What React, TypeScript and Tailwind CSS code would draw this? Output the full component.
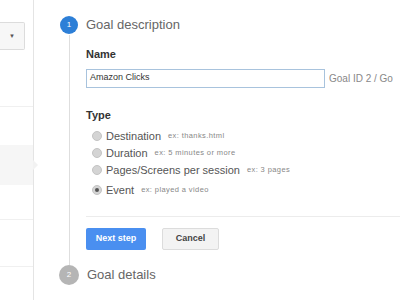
import React from 'react';

const types = [
    { label: 'Destination', hint: 'ex: thanks.html', checked: false },
    { label: 'Duration', hint: 'ex: 5 minutes or more', checked: false },
    { label: 'Pages/Screens per session', hint: 'ex: 3 pages', checked: false },
    { label: 'Event', hint: 'ex: played a video', checked: true },
];

const Radio: React.FC<{ checked: boolean }> = ({ checked }) => (
    <span className="w-[10px] h-[10px] rounded-full bg-[#d4d4d4] border border-[#c4c4c4] flex items-center justify-center shrink-0">
        {checked && <span className="w-[4px] h-[4px] rounded-full bg-[#555]" />}
    </span>
);

const Sidebar: React.FC = () => (
    <div className="relative w-[34px] shrink-0 border-r border-[#e4e4e4] h-[300px] flex flex-col">
        <div className="h-[22px]" />
        <div className="h-[28px] w-[25px] bg-[#f7f7f7] border border-[#dcdcdc] border-l-0 rounded-r-[2px] flex items-center justify-center">
            <span className="text-[6px] text-[#555] leading-none">▼</span>
        </div>
        <div className="h-[57px] border-b border-[#f0f0f0]" />
        <div className="h-[38px]" />
        <div className="h-[40px] bg-[#f6f6f6]" />
        <div className="h-[35px] border-b border-[#f0f0f0]" />
        <div className="h-[47px] border-b border-[#f0f0f0]" />
        <span className="absolute right-[-5px] top-[160px] w-0 h-0 border-y-[5px] border-y-transparent border-l-[5px] border-l-[#f2f2f2]" />
    </div>
);

export default function App() {
    return (
        <div className="w-[400px] h-[300px] bg-white overflow-hidden flex font-['Liberation_Sans',Arial,sans-serif]">
            <Sidebar />
            <div className="flex-1 min-w-0 pl-[26px] pt-[15px]">
                <div className="flex items-center gap-[8px]">
                    <span className="w-[18px] h-[18px] rounded-full bg-[#2d7fd7] text-white text-[8px] flex items-center justify-center shrink-0">1</span>
                    <span className="text-[13px] text-[#666]">Goal description</span>
                </div>
                <div className="ml-[9px] border-l border-[#dedede] pl-[16px] pt-[12px] pb-[15px]">
                    <div className="text-[11px] font-bold text-[#333] leading-[14px]">Name</div>
                    <div className="mt-[8px] flex items-center gap-[4px] whitespace-nowrap overflow-hidden">
                        <div className="w-[239px] h-[19px] border border-[#a8c3dd] px-[3px] flex items-center text-[9px] text-[#333] shrink-0">Amazon Clicks</div>
                        <span className="text-[10px] text-[#888]">Goal ID 2 / Go</span>
                    </div>
                    <div className="mt-[20px] text-[11px] font-bold text-[#333] leading-[14px]">Type</div>
                    <div className="mt-[6px] pl-[6px] flex flex-col">
                        {types.map((t) => (
                            <div key={t.label} className="h-[17px] last:h-[20px] last:pt-[3px] flex items-center gap-[4px] whitespace-nowrap">
                                <Radio checked={t.checked} />
                                <span className="text-[11px] text-[#555]">{t.label}</span>
                                <span className="ml-[3px] text-[7.5px] tracking-[0.4px] text-[#888]">{t.hint}</span>
                            </div>
                        ))}
                    </div>
                    <div className="mt-[17px] border-t border-[#ececec]" />
                    <div className="mt-[11px] flex gap-[16px]">
                        <button className="w-[60px] h-[22px] bg-[#4a8ff0] text-white text-[9px] font-bold rounded-[2px]">Next step</button>
                        <button className="w-[57px] h-[22px] bg-[#f3f3f3] border border-[#dcdcdc] text-[#444] text-[9px] font-bold rounded-[2px]">Cancel</button>
                    </div>
                </div>
                <div className="flex items-center gap-[8px]">
                    <span className="w-[20px] h-[20px] -ml-[1px] rounded-full bg-[#b5b5b5] text-white text-[8px] flex items-center justify-center shrink-0">2</span>
                    <span className="text-[13px] text-[#666]">Goal details</span>
                </div>
            </div>
        </div>
    );
}
